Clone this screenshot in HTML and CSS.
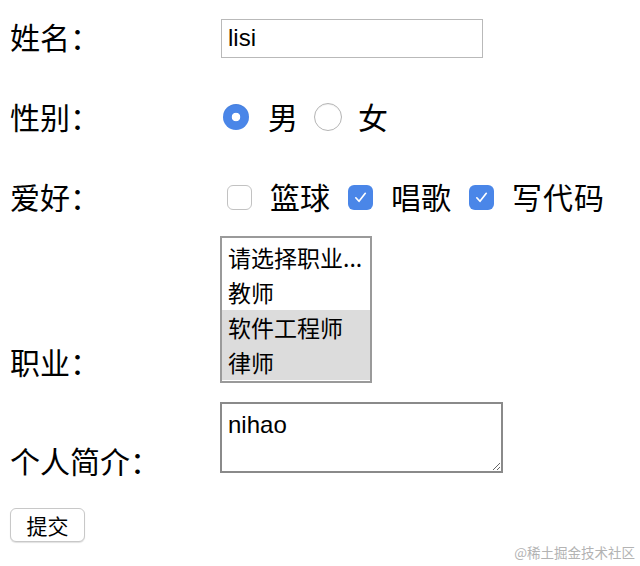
FILE: index.html
```html
<!DOCTYPE html>
<html lang="zh">
<head>
<meta charset="utf-8">
<title>表单</title>
<link rel="stylesheet" href="styles.css">
</head>
<body>
<form class="form">
  <div class="row row-name">
    <label class="label" for="name">姓名：</label>
    <input class="text-input" id="name" type="text" value="lisi">
  </div>
  <div class="row row-sex">
    <span class="label">性别：</span>
    <div class="choices">
      <input class="radio" type="radio" name="sex" id="m" checked>
      <label class="choice-text" for="m">男</label>
      <input class="radio radio-2" type="radio" name="sex" id="f">
      <label class="choice-text" for="f">女</label>
    </div>
  </div>
  <div class="row row-hobby">
    <span class="label">爱好：</span>
    <div class="choices">
      <input class="check" type="checkbox" id="h1">
      <label class="choice-text" for="h1">篮球</label>
      <input class="check" type="checkbox" id="h2" checked>
      <label class="choice-text" for="h2">唱歌</label>
      <input class="check" type="checkbox" id="h3" checked>
      <label class="choice-text" for="h3">写代码</label>
    </div>
  </div>
  <div class="row row-job">
    <label class="label label-bottom" for="job">职业：</label>
    <select class="listbox" id="job" size="4" multiple>
      <option>请选择职业...</option>
      <option>教师</option>
      <option selected>软件工程师</option>
      <option selected>律师</option>
    </select>
  </div>
  <div class="row row-intro">
    <label class="label label-bottom" for="intro">个人简介：</label>
    <textarea class="textarea" id="intro">nihao</textarea>
  </div>
  <div class="row row-submit">
    <button class="btn" type="submit">提交</button>
  </div>
</form>
<div class="watermark">@稀土掘金技术社区</div>
</body>
</html>
```
FILE: styles.css
```css
* { box-sizing: border-box; }
html, body {
  margin: 0;
  padding: 0;
  background: #fff;
}
body {
  width: 640px;
  height: 566px;
  position: relative;
  overflow: hidden;
  font-family: "Liberation Sans", "Noto Sans CJK SC", sans-serif;
  color: #000;
}
.form {
  display: flex;
  flex-direction: column;
  padding-left: 10px;
}
.row {
  display: flex;
  align-items: center;
}
.label {
  width: 210px;
  flex: none;
  font-family: "Noto Sans CJK SC", sans-serif;
  font-size: 30px;
  line-height: 40px;
}
.row-name { margin-top: 16px; height: 40px; }
.row-name .text-input { margin-top: 4px; }
.row-sex { margin-top: 40px; height: 40px; }
.row-hobby { margin-top: 40px; height: 40px; }
.row-job { margin-top: 20px; align-items: flex-end; }
.row-intro { margin-top: 19px; align-items: flex-end; }
.row-submit { margin-top: 35px; }

.label-bottom { line-height: 36px; margin-bottom: 4px; }
.row-intro .label-bottom { margin-bottom: -5px; }

.text-input {
  width: 262px;
  height: 39px;
  margin: 0 0 0 1px;
  padding: 0 6px;
  border: 1px solid #b9b9b9;
  border-radius: 0;
  font-family: "Liberation Sans", "Noto Sans CJK SC", sans-serif;
  font-size: 24px;
  color: #000;
  outline: none;
}

.choices {
  display: flex;
  align-items: center;
}
.choice-text {
  font-family: "Noto Sans CJK SC", sans-serif;
  font-size: 30px;
  line-height: 40px;
}
.radio {
  appearance: none;
  -webkit-appearance: none;
  width: 26px;
  height: 26px;
  margin: 2px 19px 0 3px;
  border-radius: 50%;
  border: 1px solid #b5b5b5;
  background: #fff;
  box-shadow: inset 0 1px 1px rgba(0,0,0,0.06);
}
.radio:checked {
  border: none;
  background: radial-gradient(circle, #fff 0 4px, #4a86e8 4.6px);
}
.radio-2 { margin-left: 16px; margin-right: 16px; width: 28px; height: 28px; }
.check {
  appearance: none;
  -webkit-appearance: none;
  width: 25px;
  height: 25px;
  margin: 2px 18px 0 18px;
  border-radius: 6px;
  border: 1px solid #c2c2c2;
  background: #fff;
}
.check:first-child { margin-left: 7px; }
.check:checked {
  border: none;
  background: #4a86e8 url("data:image/svg+xml,%3Csvg xmlns='http://www.w3.org/2000/svg' width='25' height='25' viewBox='0 0 25 25'%3E%3Cpath d='M7.8 12.8l3.2 3.5 6.3-8' fill='none' stroke='%23fff' stroke-width='1.7' stroke-linecap='round' stroke-linejoin='round'/%3E%3C/svg%3E") center/25px 25px no-repeat;
}
.row-hobby .choice-text:last-child { letter-spacing: 1px; }

.listbox {
  width: 152px;
  height: 147px;
  margin: 0;
  padding: 2px 0;
  border: 2px solid #9a9a9a;
  border-radius: 0;
  font-family: "Noto Sans CJK SC", sans-serif;
  font-size: 23px;
  color: #000;
  overflow: hidden;
  outline: none;
  background: #fff;
}
.listbox option {
  height: 35px;
  line-height: 35px;
  padding: 0 6px;
  min-height: 35px;
  white-space: nowrap;
}
.listbox option:checked {
  background: #dcdcdc linear-gradient(#dcdcdc, #dcdcdc);
  color: #000;
}

.textarea {
  width: 283px;
  height: 71px;
  margin: 0;
  padding: 6px 6px;
  border: 2px solid #8a8a8a;
  border-radius: 0;
  font-family: "Liberation Sans", "Noto Sans CJK SC", sans-serif;
  font-size: 24px;
  line-height: 30px;
  color: #000;
  resize: both;
  outline: none;
}

.btn {
  width: 75px;
  height: 34px;
  padding: 0;
  border: 1px solid #c8c8c8;
  border-radius: 6px;
  background: #fff;
  box-shadow: 0 1px 1px rgba(0,0,0,0.12);
  font-family: "Noto Sans CJK SC", sans-serif;
  font-size: 21px;
  line-height: 32px;
  color: #000;
}

.watermark {
  position: absolute;
  right: 5px;
  bottom: 5px;
  font-family: "Noto Sans CJK SC", sans-serif;
  font-size: 13.5px;
  line-height: 17px;
  color: #b3b3b3;
}
```
